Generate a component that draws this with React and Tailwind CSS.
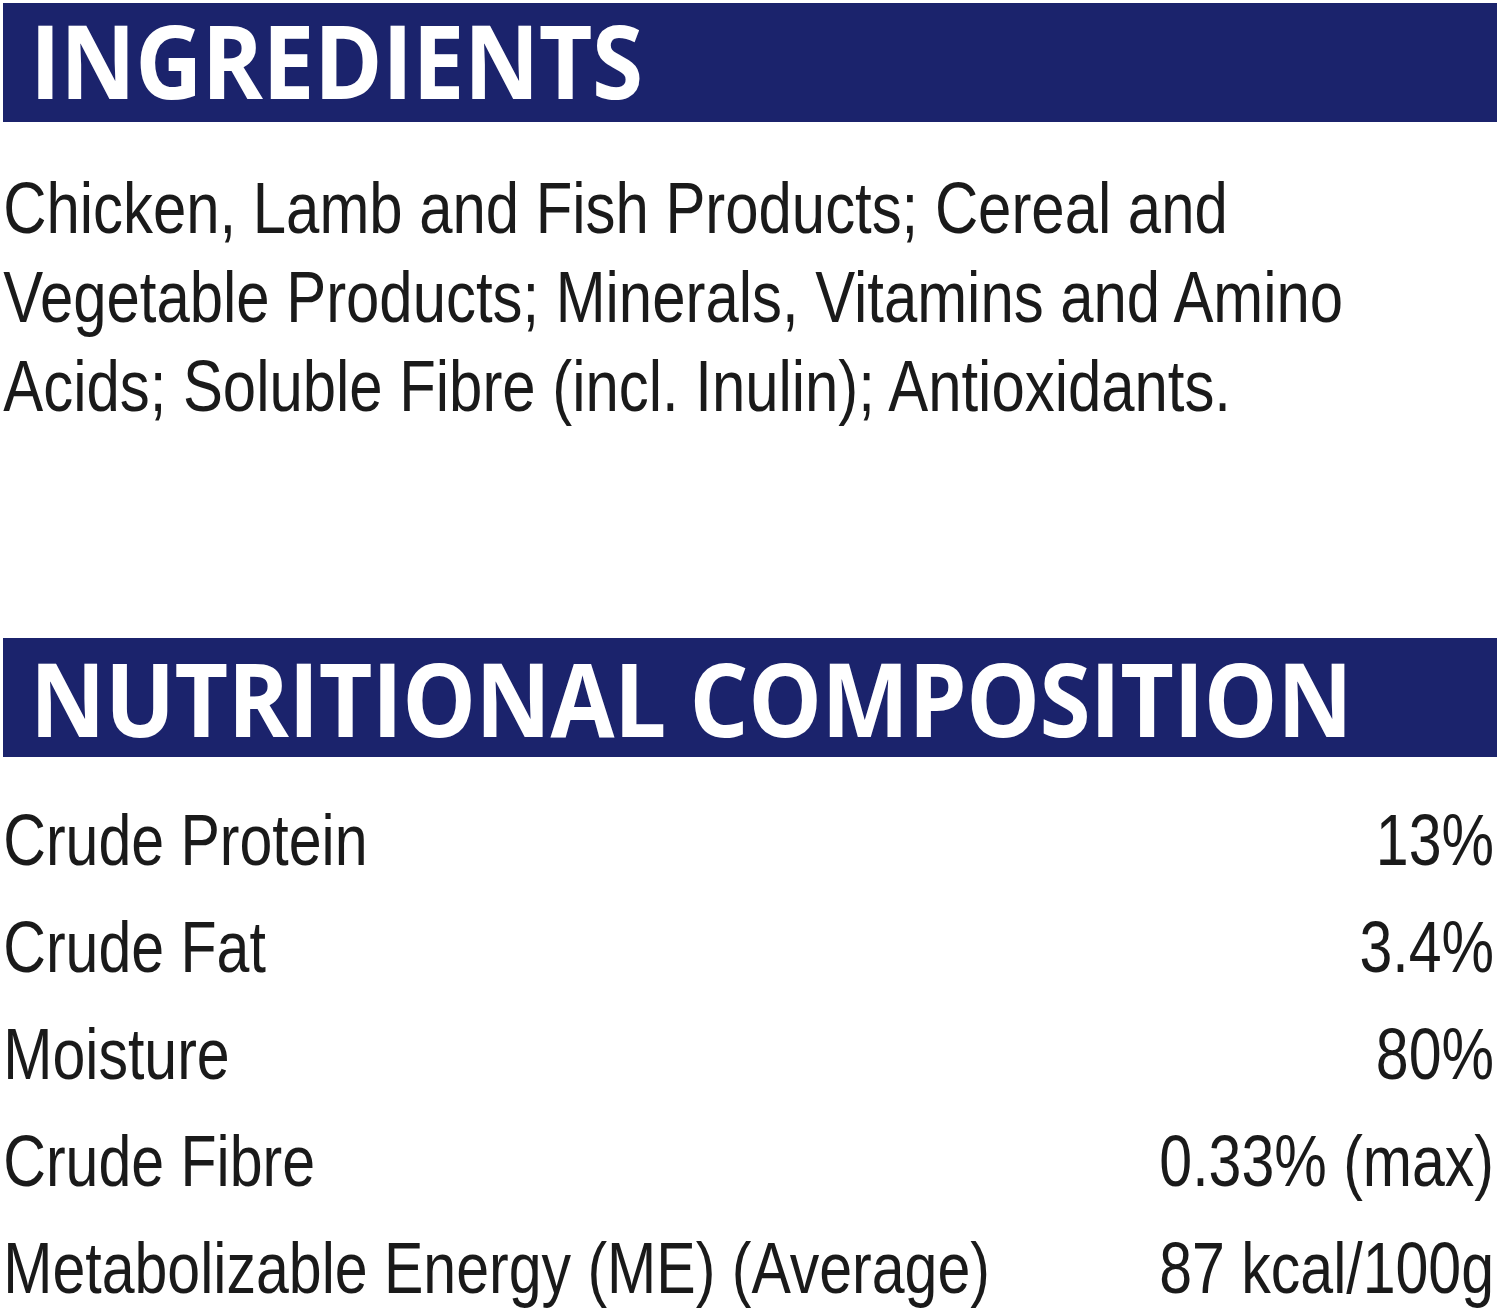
import React from 'react';

const rows = [
  { label: 'Crude Protein', value: '13%' },
  { label: 'Crude Fat', value: '3.4%' },
  { label: 'Moisture', value: '80%' },
  { label: 'Crude Fibre', value: '0.33% (max)' },
  { label: 'Metabolizable Energy (ME) (Average)', value: '87 kcal/100g' },
];

// no narrow face installed, so the condensed look comes from a horizontal scale
const bodyFont = "font-['Liberation_Sans_Narrow','Arial_Narrow','Liberation_Sans',sans-serif]";

const Heading = ({ children, className, leading }) => (
  <div className={`ml-[3px] w-[1494px] h-[119px] bg-[#1b236c] pl-[27px] ${className}`}>
    <h2 className={`w-max font-['Open_Sans',sans-serif] font-bold text-[103px] ${leading} tracking-[-0.5px] text-white whitespace-nowrap origin-left scale-x-[0.9]`}>
      {children}
    </h2>
  </div>
);

export default function App() {
  return (
    <div className="w-[1500px] h-[1313px] bg-white overflow-hidden text-[#1a1a1a]">
      <Heading className="mt-[3px]" leading="leading-[112px]">INGREDIENTS</Heading>

      <p className={`${bodyFont} mt-[41px] pl-[4px] text-[73px] leading-[89px] whitespace-nowrap origin-left scale-x-[0.82]`}>
        Chicken, Lamb and Fish Products; Cereal and
        <br />
        Vegetable Products; Minerals, Vitamins and Amino
        <br />
        Acids; Soluble Fibre (incl. Inulin); Antioxidants.
      </p>

      <Heading className="mt-[208px]" leading="leading-[119px]">NUTRITIONAL COMPOSITION</Heading>

      <div className={`${bodyFont} mt-[30px] w-[1830px] pl-[4px] pr-[8px] text-[72px] leading-[107px] origin-top-left scale-x-[0.82]`}>
        {rows.map((row) => (
          <div key={row.label} className="flex justify-between whitespace-nowrap">
            <span>{row.label}</span>
            <span>{row.value}</span>
          </div>
        ))}
      </div>
    </div>
  );
}
